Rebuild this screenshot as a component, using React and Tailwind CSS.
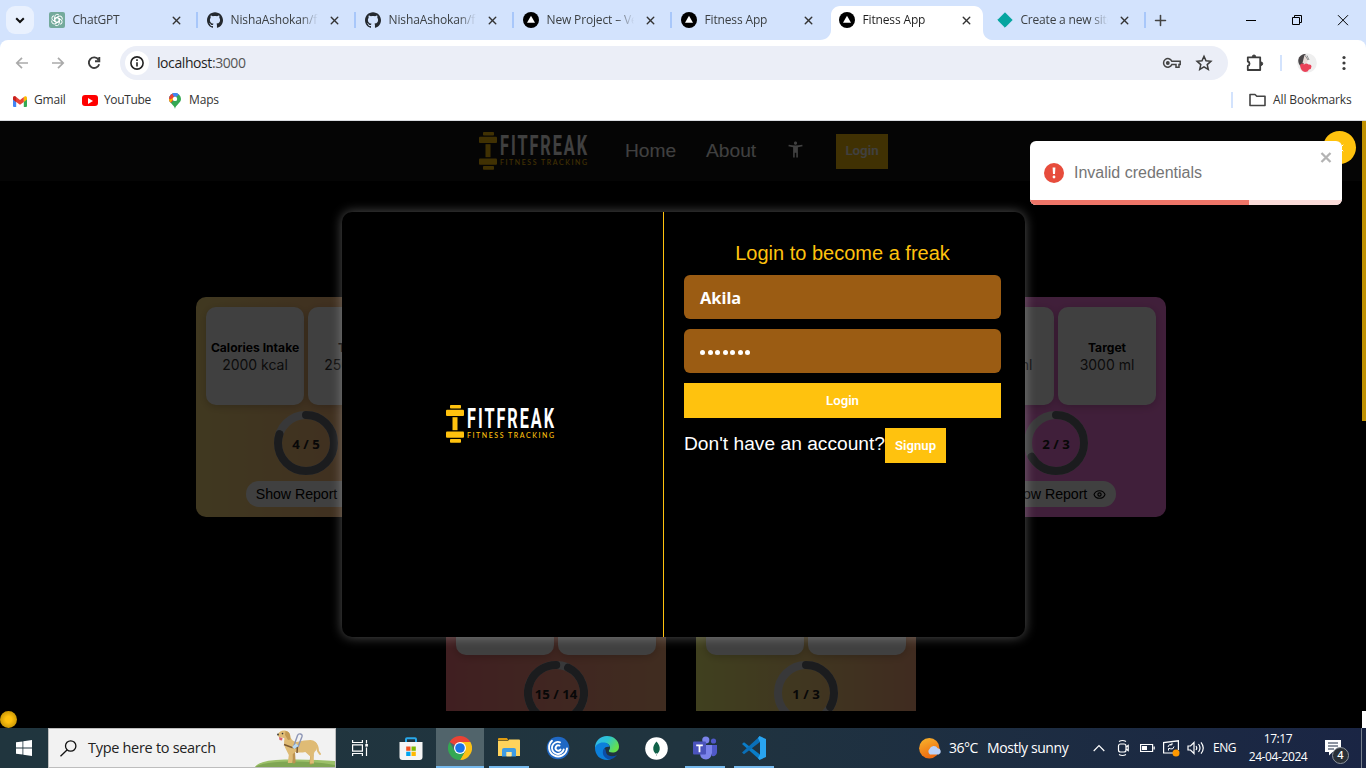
import React from "react";
import { SiGithub } from "react-icons/si";
import { MdAccessibilityNew } from "react-icons/md";
import { X, Plus, Eye } from "lucide-react";

const ui = "font-['Open_Sans','Noto_Sans',sans-serif]";
const arial = "font-['Liberation_Sans',Arial,sans-serif]";

/* ---------- Browser icons ---------- */

function ChatIcon() {
  return (
    <svg width="16" height="16" viewBox="0 0 16 16">
      <rect width="16" height="16" rx="2" fill="#74aa9c" />
      <g fill="none" stroke="#fff" strokeWidth="0.95">
        {[0, 60, 120, 180, 240, 300].map((a) => (
          <path key={a} transform={`rotate(${a} 8 8)`} d="M5.8 9.3V4.6a2.4 2.4 0 0 1 4.3-1.3M5.8 6.7L8 5.4l3.6 2.1" />
        ))}
      </g>
    </svg>
  );
}

function VercelIcon() {
  return (
    <svg width="16" height="16" viewBox="0 0 16 16">
      <circle cx="8" cy="8" r="8" fill="#000" />
      <path d="M8 3.8l4 7H4z" fill="#fff" />
    </svg>
  );
}

function DiamondIcon() {
  return (
    <svg width="16" height="16" viewBox="0 0 16 16">
      <path d="M8 .8L15.2 8 8 15.2.8 8z" fill="#05a5a0" stroke="#05a5a0" strokeLinejoin="round" />
    </svg>
  );
}

function GithubIcon() {
  return <SiGithub className="size-4 text-[#24292f]" />;
}

const tabs = [
  { title: "ChatGPT", icon: ChatIcon, spacing: "tracking-[-0.2px]" },
  { title: "NishaAshokan/f", icon: GithubIcon, spacing: "tracking-[-0.12px]" },
  { title: "NishaAshokan/f", icon: GithubIcon, spacing: "tracking-[-0.12px]" },
  { title: "New Project – Ve", icon: VercelIcon, spacing: "tracking-[-0.15px]" },
  { title: "Fitness App", icon: VercelIcon, spacing: "tracking-[-0.15px]" },
  { title: "Fitness App", icon: VercelIcon, spacing: "tracking-[-0.15px]", active: true },
  { title: "Create a new site", icon: DiamondIcon, spacing: "tracking-[-0.2px]" },
];

function Tab({ title, icon: Icon, spacing, active, hideLine }) {
  return (
    <div className="relative flex h-[34px] w-[158px] shrink-0 items-center pb-1.5 pl-[9px]">
      {active && (
        <svg className="absolute -left-2.5 top-0" width="172" height="34" viewBox="0 0 172 34">
          <path d="M0 34c6 0 11-4 11-10V9c0-5 4-9 9-9h134c5 0 9 4 9 9v15c0 6 4 10 10 10z" fill="#fff" />
        </svg>
      )}
      <div className="relative flex size-4 items-center justify-center">
        <Icon />
      </div>
      <div
        className={`relative ml-2 w-[89px] overflow-hidden whitespace-nowrap text-[12px] leading-4 ${spacing} ${
          active ? "text-[#1f1f1f]" : "text-[#3c4043]"
        } [mask-image:linear-gradient(to_right,#000_78%,transparent_98%)]`}
      >
        {title}
      </div>
      <X className="relative ml-[8.5px] size-[13px] text-[#333]" strokeWidth={2.6} />
      {!active && !hideLine && <div className="absolute right-0 top-1.5 h-4 w-0.5 bg-[#a8c7fa]" />}
    </div>
  );
}

function TabStrip() {
  return (
    <div className="flex h-10 items-start bg-[#d3e3fd] pl-1.5 pt-1.5">
      <div className="flex size-7 shrink-0 items-center justify-center rounded-[9px] bg-[#e9f1fe]">
        <svg width="10" height="7" viewBox="0 0 10 7" fill="none" stroke="#111" strokeWidth="2">
          <path d="M1.2 1.2L5 5l3.8-3.8" />
        </svg>
      </div>
      <div className="ml-[5.500px] flex">
        {tabs.map((t, i) => (
          <Tab key={i} {...t} hideLine={i === 4} />
        ))}
      </div>
      <Plus className="ml-[6.500px] mt-[5.5px] size-[17px] text-[#444]" strokeWidth={2.2} />
      <svg className="ml-[74px] mt-1" width="120" height="20" viewBox="0 0 120 20" fill="none" stroke="#000" strokeWidth="1">
        <path d="M3 10.5h10" />
        <path d="M49.5 7.5h7v7h-7zM51.5 7.5v-2h7v7h-2" />
        <path d="M95 5.2l10 10M105 5.2l-10 10" />
      </svg>
    </div>
  );
}

function AddressBar() {
  return (
    <div className="bg-[#d3e3fd]">
      <div className="flex h-[46px] items-center rounded-t-[8px] bg-white pl-[15px]">
        <svg width="90" height="16" viewBox="0 0 90 16" fill="none" strokeWidth="1.7">
          <path d="M13 8H2M7 2.8L1.8 8 7 13.2" stroke="#aaa" />
          <path d="M37 8h11M43 2.8L48.200 8 43 13.200" stroke="#aaa" />
          <path d="M83.500 4.600A5.300 5.300 0 1 0 84.200 9.300M84.300 2v4.200h-4.300" stroke="#3c3c3c" strokeWidth="1.900" />
        </svg>
        <div className="ml-[15px] flex h-[34px] w-[1108px] items-center rounded-full bg-[#ebeef7] pl-[5px]">
          <div className="flex size-6 items-center justify-center rounded-full bg-white">
            <svg width="14" height="14" viewBox="0 0 14 14" fill="none" stroke="#222" strokeWidth="1.6">
              <circle cx="7" cy="7" r="6.100" />
              <path d="M7 6.200v4.300M7 3.300v1.700" />
            </svg>
          </div>
          <span className="ml-2 flex-1 text-[14px] leading-5 tracking-[-0.42px] text-[#1f1f1f]">
            localhost<span className="text-[#555]">:3000</span>
          </span>
          <svg width="20" height="12" viewBox="0 0 20 12" fill="none" stroke="#444" strokeWidth="1.500">
            <path d="M9.800 4.200h8.400v3.400h-1.200v2.600h-3V7.600H9.800A4.300 4.300 0 1 1 9.800 4.200z" />
            <circle cx="5.800" cy="6" r="1.200" fill="#444" />
          </svg>
          <svg className="ml-[13px] mr-[15px]" width="18" height="18" viewBox="0 0 18 18" fill="none" stroke="#3c3c3c" strokeWidth="1.500">
            <path d="M9 2.300l2 4.500 4.900.500-3.700 3.300 1.100 4.800L9 12.900l-4.300 2.500 1.100-4.800L2.100 7.300 7 6.800z" />
          </svg>
        </div>
        <svg className="ml-[18px]" width="18" height="18" viewBox="0 0 18 18" fill="none" stroke="#3c3c3c" strokeWidth="1.800" strokeLinejoin="round">
          <path d="M1.800 3.300H14.200V16H1.800v-4.200a2.200 2.200 0 0 0 0-4.300z" />
          <path d="M6.300 2.700a1.700 1.700 0 0 1 3.400 0zM15 8a1.700 1.700 0 0 1 0 3.400z" fill="#3c3c3c" strokeWidth="1" />
        </svg>
        <div className="ml-4 h-4 w-0.5 bg-[#d3e3fd]" />
        <svg className="ml-[15px]" width="20" height="20" viewBox="0 0 20 20">
          <circle cx="10" cy="10" r="9.800" fill="#efefef" />
          <path d="M2 4.500Q5 .500 8.500 1l-1 9-4 3.500Q0 9 2 4.500z" fill="#4a4648" />
          <path d="M7.500 2l4 5-3 4-3-1z" fill="#e8dcd8" />
          <path d="M8.500 3l2.500 4M10 2.500l2 4.500" stroke="#777" strokeWidth=".8" />
          <path d="M3 12q2-2.500 4-.500 2.500-2 4.500 0 3-.500 3 2 0 2.500-2.500 3-1 2.500-4 2.500Q3.500 18 3 12z" fill="#ea4259" />
        </svg>
        <svg className="ml-[25px]" width="4" height="16" viewBox="0 0 4 16" fill="#3c3c3c">
          <circle cx="2" cy="2.500" r="1.600" />
          <circle cx="2" cy="8" r="1.600" />
          <circle cx="2" cy="13.500" r="1.600" />
        </svg>
      </div>
    </div>
  );
}

function Bookmarks() {
  return (
    <div className="flex h-[35px] items-center border-b border-[#dadce0] bg-white pb-1.5 pl-[13px] text-[12px] leading-4 text-[#333]">
      <svg className="mt-0.5" width="14" height="11" viewBox="0 0 14 11">
        <path d="M0 1.500v8.500q0 1 1 1h2.200V4.500z" fill="#4285f4" />
        <path d="M14 1.500v8.500q0 1-1 1h-2.200V4.500z" fill="#34a853" />
        <path d="M10.800 1L12 .3q2-.7 2 1.700v1.500l-3.200 2.500z" fill="#fbbc04" />
        <path d="M0 3.500V2Q0-.4 2 .3L3.200 1 7 4l3.800-3v5L7 8.800 3.200 6z" fill="#ea4335" />
        <path d="M0 3.500V2Q0-.4 2 .3L3.200 1v5z" fill="#c5221f" />
      </svg>
      <span className="ml-[7px] w-[32px] whitespace-nowrap tracking-[-0.2px]">Gmail</span>
      <div className="relative ml-4 mt-px flex h-[11px] w-4 items-center justify-center rounded-[3px] bg-[#f00]">
        <svg width="5" height="6" viewBox="0 0 5 6"><path d="M0 0l5 3-5 3z" fill="#fff" /></svg>
      </div>
      <span className="ml-1.5 w-[46px] whitespace-nowrap tracking-[-0.35px]">YouTube</span>
      <svg className="ml-[19px] mt-px" width="12" height="16" viewBox="0 0 12 16">
        <defs>
          <clipPath id="pin"><path d="M6 16C5.600 12 0 10 0 6a6 6 0 0 1 12 0c0 4-5.600 6-6 10z" /></clipPath>
        </defs>
        <g clipPath="url(#pin)">
          <rect width="12" height="16" fill="#34a853" />
          <path d="M0 11L12-1v-2H-2v14z" fill="#4285f4" />
          <path d="M-1 0h4l3 5-4 5-3-2z" fill="#ea4335" />
          <path d="M3 0l3 5 6-6z" fill="#4285f4" />
          <path d="M0 11l7-8-5.500 3.500L0 6z" fill="#fbbc04" />
        </g>
        <circle cx="6" cy="5.900" r="2.200" fill="#fff" />
      </svg>
      <span className="ml-2 tracking-[-0.15px]">Maps</span>
      <div className="ml-auto h-4 w-0.5 bg-[#d3e3fd]" />
      <svg className="ml-4" width="17" height="14" viewBox="0 0 17 14" fill="none" stroke="#444" strokeWidth="1.600" strokeLinejoin="round">
        <path d="M1 1.500h5l1.800 1.800H16V12.500H1z" />
      </svg>
      <span className="ml-[7px] mr-[14px] w-[79px] whitespace-nowrap tracking-[-0.1px]">All Bookmarks</span>
    </div>
  );
}

/* ---------- Page ---------- */

function Logo() {
  return (
    <svg width="110" height="40" viewBox="0 0 110 40">
      <g fill="#ffc20e">
        <rect x="4" y="1" width="11" height="3.500" rx=".8" />
        <rect x="0" y="5.800" width="18" height="6.200" rx="1" />
        <rect x="6.500" y="13.200" width="5" height="13" />
        <rect x="0" y="27.500" width="18" height="6.200" rx="1" />
        <rect x="4" y="35" width="11" height="3.800" rx=".8" />
      </g>
      <g transform="translate(21 23.500) scale(.58 1)">
        <text textLength="150" fill="#fff" fontFamily="Roboto" fontWeight="700" fontSize="28">FITFREAK</text>
      </g>
      <text x="21" y="34" textLength="87" fill="#ffc20e" fontFamily="Lato" fontWeight="500" fontSize="7">FITNESS TRACKING</text>
    </svg>
  );
}

function Navbar() {
  return (
    <div className="flex h-[60px] items-center bg-[#151515] pl-[478.500px]">
      <Logo />
      <span className="ml-[36.500px] w-[51px] text-[19.2px] text-white">Home</span>
      <span className="ml-[30px] w-[51px] text-[19.2px] text-white">About</span>
      <MdAccessibilityNew className="-mt-1 ml-[29px] size-[19px] text-white" />
      <button className="ml-[31px] h-[35px] w-[52px] bg-[#ffc20e] font-['Roboto',sans-serif] text-[13.3px] font-semibold text-white">Login</button>
    </div>
  );
}

const cards = [
  { name: "Calories Intake", value: "2000 kcal", target: "2500 kcal", label: "4 / 5", part: 0.8, bg: "bg-linear-to-r from-[#ffe080] to-[#ffad80]" },
  { name: "Sleep", value: "8 hrs", target: "8 hrs", label: "8 / 8", part: 1, bg: "bg-[#ffad80]", covered: true },
  { name: "Steps", value: "5000", target: "10000", label: "1 / 2", part: 0.5, bg: "bg-[#ffad80]", covered: true },
  { name: "Water", value: "2000 ml", target: "3000 ml", label: "2 / 3", part: 0.667, bg: "bg-[#ff7ce5]" },
  { name: "Weight", label: "15 / 14", part: 0.929, bg: "bg-linear-to-r from-[#ff7c84] to-[#ffb280]", flip: true },
  { name: "Workout", label: "1 / 3", part: 0.333, bg: "bg-linear-to-r from-[#ffff7c] to-[#ffad80]" },
];

function Ring({ part, label, flip }) {
  const len = 2 * Math.PI * 28;
  return (
    <div className="relative flex size-16 items-center justify-center">
      <svg className="absolute inset-0" width="64" height="64" viewBox="0 0 64 64" fill="none" strokeWidth="8">
        <circle cx="32" cy="32" r="28" stroke="#dfe0e3" />
        <circle
          cx="32" cy="32" r="28" stroke="#6b6f78" strokeLinecap="round"
          strokeDasharray={`${len * part} ${len}`}
          transform={flip ? "rotate(-64.500 32 32)" : "rotate(-90 32 32)"}
        />
      </svg>
      <span className="relative mt-0.5 font-['Noto_Sans',sans-serif] text-[13.2px] font-bold leading-4 text-[#222]">{label}</span>
    </div>
  );
}

function Tile({ name, value }) {
  return (
    <div className="flex size-[98px] flex-col items-center justify-center whitespace-nowrap rounded-[10px] bg-white font-['Inter',sans-serif] shadow-[0_2px_8px_rgba(0,0,0,0.2)]">
      {value && (
        <>
          <span className="text-[12.1px] font-bold leading-4 text-black">{name}</span>
          <span className="text-[14px] leading-[17px] text-[#333]">{value}</span>
        </>
      )}
    </div>
  );
}

function Card({ name, value, target, label, part, bg, flip, covered }) {
  if (covered) return <div className={`size-[220px] rounded-[10px] ${bg}`} />;
  return (
    <div className={`flex size-[220px] flex-col items-center rounded-[10px] pt-2.5 ${bg}`}>
      <div className="flex gap-1">
        <Tile name={name} value={value} />
        <Tile name="Target" value={target} />
      </div>
      <div className="mt-1.5">
        <Ring part={part} label={label} flip={flip} />
      </div>
      {value && (
        <div className="mt-1.5 flex h-[26px] w-[120px] items-center justify-center gap-1.5 whitespace-nowrap rounded-full bg-white pt-px text-[14.2px] tracking-[-0.05px] text-black">
          Show Report
          <Eye className="size-[13px]" strokeWidth={2.1} />
        </div>
      )}
    </div>
  );
}

function LoginModal() {
  return (
    <div className="flex h-[425px] w-[683px] rounded-[10px] bg-black shadow-[0_0_12px_rgba(255,255,255,0.33)]">
      <div className="flex w-[322px] items-center justify-center border-r border-[#ffc20e] pb-0.5 pr-1">
        <Logo />
      </div>
      <div className="flex flex-1 flex-col pl-5 pr-6 pt-[27px]">
        <h1 className="text-center text-[20px] leading-7 text-[#ffc20e]">Login to become a freak</h1>
        <div className="mt-2 flex h-11 items-center rounded-[6px] bg-[#9b5c13] pl-4 pt-0.5 font-['Noto_Sans',sans-serif] text-[16.4px] font-bold text-white">Akila</div>
        <div className="mt-2.5 flex h-11 items-center gap-[2.500px] rounded-[6px] bg-[#9b5c13] pl-4">
          {[0, 1, 2, 3, 4, 5, 6].map((i) => (
            <span key={i} className="mt-0.5 size-[5px] rounded-full bg-white" />
          ))}
        </div>
        <button className="mt-2.5 h-[35px] bg-[#ffc20e] font-['Roboto',sans-serif] text-[13.2px] font-semibold text-white">Login</button>
        <div className="mt-2.5 flex text-white">
          <span className="w-[201px] whitespace-nowrap pt-0.5 text-[19.2px] leading-7">Don't have an account?</span>
          <button className="h-[35px] w-[61px] bg-[#ffc20e] font-['Roboto',sans-serif] text-[13.2px] font-semibold">Signup</button>
        </div>
      </div>
    </div>
  );
}

function Toast() {
  return (
    <div className="absolute left-[1030px] top-5 h-16 w-[312px] overflow-hidden rounded-[6px] bg-white">
      <div className="flex h-full items-center pl-3.5">
        <svg width="20" height="20" viewBox="0 0 20 20">
          <circle cx="10" cy="10" r="10" fill="#e74c3c" />
          <path d="M8.600 4.500h2.800l-.4 6.500H9z" fill="#fff" />
          <circle cx="10" cy="14" r="1.400" fill="#fff" />
        </svg>
        <span className="ml-2.5 text-[16px] text-[#757575]">Invalid credentials</span>
      </div>
      <svg className="absolute right-2.5 top-[11px]" width="12" height="11" viewBox="0 0 12 11" stroke="#b3b3b3" strokeWidth="2.300">
        <path d="M1.500 1l9 9M10.500 1l-9 9" />
      </svg>
      <div className="absolute inset-x-0 bottom-0 h-[5px] bg-[#fadbd8]">
        <div className="h-full w-[219px] bg-[#ee7568]" />
      </div>
    </div>
  );
}

function Page() {
  return (
    <div className={`relative h-[607px] overflow-hidden bg-black ${arial}`}>
      <div className="flex h-[590px]">
        <div className="w-[1362px] overflow-hidden">
          <Navbar />
          <div className="mt-[116px] flex flex-wrap justify-center gap-[30px] px-[150px]">
            {cards.map((c) => (
              <Card key={c.name} {...c} />
            ))}
          </div>
        </div>
        <div className="w-1">
          <div className="h-[300px] bg-[#bf9000]" />
        </div>
      </div>
      <div className="flex h-[17px] justify-end">
        <div className="w-1 bg-white" />
      </div>
      <div className="absolute left-0 top-0 flex h-[607px] w-[1362px] justify-center bg-black/75 pl-[5px] pt-[91px]">
        <LoginModal />
      </div>
      <div className="absolute left-0 top-[590px] size-[17px] rounded-full bg-[radial-gradient(circle,#ffc10e_25%,#c79505_75%)]" />
      <div className="absolute left-[1323px] top-2.5 flex size-[33px] items-center justify-center rounded-full bg-[#ffc20e] text-white">
        <X className="size-3" />
      </div>
      <Toast />
    </div>
  );
}

/* ---------- Taskbar ---------- */

function Dog() {
  return (
    <svg width="80" height="38" viewBox="0 0 80 38">
      <path d="M0 38q4-7 30-7.500Q60 30 80 32v6z" fill="#9cc069" />
      <path d="M0 38q8-5 34-5.500T80 36v2z" fill="#7fa653" />
      <g strokeLinecap="round" strokeLinejoin="round">
        <path d="M38.500 24l.5 9M54 22l3 4-1 8" stroke="#bd9350" strokeWidth="3.200" fill="none" />
        <path d="M60 14q3 3 3 8l2 3" stroke="#dfbb75" strokeWidth="2" fill="none" />
        <path d="M23 5q2-4 7-3.500 5 .5 5.500 7 2 4 6 4.500 8-2 14-2 6 .5 7 6-.5 4-3 6l-1 3 .5 8.500h-4l.3-7-5-4.500q-5 1-10 0l-2.500 2-.5 9h-4.500l1-8-3.500-7q-2-4-.8-9.500-1-1-5.500-1.500-2-1-1-3z" fill="#dfbb75" />
      </g>
      <path d="M30.500 2q4 .5 4.500 4l.5 4.500-2.500.5-3-5z" fill="#c39a52" />
      <path d="M24 8l3.500 1-.5 2.500-2.500-.5z" fill="#d9606a" />
      <circle cx="27.500" cy="4.600" r=".8" fill="#333" /><circle cx="23" cy="5.500" r=".9" fill="#333" />
      <path d="M29 15.500l8 3h6M42.500 17l-.5 7" stroke="#7c5a34" strokeWidth="1.500" fill="none" />
      <path d="M38.500 18l4-11.500q.8-2 3-1.500 2 .5 1.500 2.500L43 18" stroke="#8c95b5" strokeWidth="1.400" fill="none" />
      <path d="M37 18l4-3.500 2.500 2.500-4 3z" fill="#b8daf5" />
    </svg>
  );
}

function AppCell({ children, line, active }) {
  return (
    <div className={`relative flex h-10 w-12 shrink-0 items-center justify-center ${active ? "bg-[#51646b]" : ""}`}>
      {children}
      {line && <div className={`absolute bottom-0 h-0.5 bg-[#76b9ed] ${active ? "w-12" : "w-10"}`} />}
    </div>
  );
}

const StoreIcon = () => (
  <svg className="mt-px" width="24" height="24" viewBox="0 0 24 24">
    <path d="M7 6V2.200q0-1 1-1h8q1 0 1 1V6" fill="none" stroke="#28a8ea" strokeWidth="2" />
    <path d="M.500 5h23v15q0 3-3 3h-17q-3 0-3-3z" fill="#f5f5f5" />
    <path d="M7.200 9.500h4.300v4.300H7.200z" fill="#f25022" /><path d="M12.500 9.500h4.300v4.300h-4.300z" fill="#7fba00" />
    <path d="M7.200 14.700h4.300V19H7.200z" fill="#00a4ef" /><path d="M12.500 14.700h4.300V19h-4.300z" fill="#ffb900" />
  </svg>
);

const ChromeIcon = () => (
  <svg width="24" height="24" viewBox="0 0 24 24">
    <path d="M12 12L1.600 6A12 12 0 0 1 22.400 6z" fill="#ea4335" />
    <path d="M12 12V6h10.400A12 12 0 0 1 12 24l5.200-9z" fill="#fbc116" />
    <path d="M12 12l5.200 3L12 24A12 12 0 0 1 1.600 6l5.200 9z" fill="#34a853" />
    <circle cx="12" cy="12" r="6" fill="#fff" /><circle cx="12" cy="12" r="4.800" fill="#1a73e8" />
  </svg>
);

const FolderIcon = () => (
  <svg width="22" height="20" viewBox="0 0 22 20">
    <path d="M0 1q0-1 1-1h8l1.500 2.500H0z" fill="#e09c11" />
    <path d="M0 3h10l1-1.500h10q1 0 1 1V18H0z" fill="#ffd35c" />
    <path d="M4 18.500V12q0-2 2-2h10q2 0 2 2v6.500h-4.500V14h-5v4.500z" fill="#3f9be3" />
    <path d="M8.500 18.500V14h5v4.500z" fill="#ffe69a" />
  </svg>
);

const SwirlIcon = () => (
  <svg width="24" height="24" viewBox="0 0 24 24">
    <circle cx="12" cy="12" r="11.300" fill="#1f68c4" />
    <g fill="none" stroke="#fff" strokeWidth="1.900" strokeLinecap="round">
      <path d="M6 4.800A9 9 0 1 0 21 12.500" />
      <path d="M12.500 3.200A8.800 8.800 0 0 1 20.500 10" stroke="#1f68c4" />
      <path d="M14 6.300A6 6 0 1 0 17.700 13.500" />
      <path d="M13.500 9.600a2.700 2.700 0 1 0 1 4" />
    </g>
  </svg>
);

const EdgeIcon = () => (
  <svg width="24" height="24" viewBox="0 0 24 24">
    <defs>
      <linearGradient id="edgeTop" x1="0" y1="0" x2="1" y2=".5"><stop offset="0" stopColor="#35b4f0" /><stop offset=".5" stopColor="#2bc3d2" /><stop offset="1" stopColor="#66e04b" /></linearGradient>
    </defs>
    <path d="M0 12C0 5 5 0 12 0s12 5 12 10.500c0 4-3 6-6.500 6-3 0-4-1-3.500-2s1-1.500 1-3C15 9 12.500 7 9 7c-5 0-8.500 4-9 6z" fill="url(#edgeTop)" />
    <path d="M0 12c.500-3 4-5.500 8-5.500 4 0 6.500 2 6.500 4.500-5-1-6.500 3-5.500 6 1.300 4 6 5.500 10 3.500-2 2.500-4.500 3.500-7 3.500C5 24 0 19 0 12z" fill="#0c7fda" />
    <path d="M9.500 12c-3 3-2 9 3 11 3 1 7-.500 9.500-4-4 2-9 1.500-10.500-1.500-1-2-.500-4-2-5.500z" fill="#0c4ea6" />
  </svg>
);

const MongoIcon = () => (
  <svg width="23" height="23" viewBox="0 0 23 23">
    <circle cx="11.500" cy="11.500" r="11.300" fill="#fff" />
    <path d="M11.500 4.500c2 2.500 3.700 4.500 3.200 8-.4 2.500-1.900 3.800-3.200 5-1.300-1.200-2.800-2.500-3.200-5-.5-3.500 1.200-5.500 3.200-8z" fill="#116149" />
    <path d="M11.500 16v3" stroke="#b8c4c2" />
  </svg>
);

const TeamsIcon = () => (
  <svg width="24" height="24" viewBox="0 0 24 24">
    <circle cx="12.800" cy="4" r="3.600" fill="#7b83eb" /><circle cx="20.500" cy="5" r="2.600" fill="#5059c9" />
    <path d="M16 9h8v7a4 4 0 0 1-5 4z" fill="#5059c9" /><path d="M7 9h12v8q-1 6-6 6.500Q7 23 7 17z" fill="#7b83eb" />
    <rect y="5.500" width="13" height="13" rx="1" fill="#4b53bc" />
    <path d="M3.200 8.500h6.600v1.700H7.400v6H5.600v-6H3.200z" fill="#fff" />
  </svg>
);

const CodeIcon = () => (
  <svg width="24" height="24" viewBox="0 0 24 24">
    <path d="M0 8l2-1.800 16 12.200V24z" fill="#0a7dc8" />
    <path d="M0 16.500l2 1.800L18 6V0z" fill="#0a6fb8" />
    <path d="M17.500 0L24 3v18l-6.500 3-1.500-2 2-3.600V6l-2-4z" fill="#29a4f0" />
  </svg>
);

function Taskbar() {
  return (
    <div className="flex h-10 items-center bg-linear-to-r from-[#20353e] via-[#20343f] to-[#1a2544] text-white">
      <div className="flex w-12 justify-center">
        <svg width="16" height="16" viewBox="0 0 16 16" fill="#fff">
          <path d="M0 2.300L6.500 1.400v6.200H0zM7.300 1.300L16 0v7.600H7.300zM0 8.400h6.500v6.200L0 13.700zM7.300 8.400H16V16l-8.700-1.300z" />
        </svg>
      </div>
      <div className="flex h-10 w-72 items-center overflow-hidden border border-[#bdbdbd] bg-[#f2f2f2] pl-[11px]">
        <svg width="17" height="17" viewBox="0 0 17 17" fill="none" stroke="#111" strokeWidth="1.300">
          <circle cx="10.700" cy="6" r="5.200" /><path d="M7 10L.500 16.300" />
        </svg>
        <span className="ml-[11px] w-[128px] whitespace-nowrap text-[14.500px] tracking-[-0.3px] text-[#222]">Type here to search</span>
        <div className="ml-auto"><Dog /></div>
      </div>
      <div className="flex gap-px">
        <AppCell>
          <svg width="18" height="16" viewBox="0 0 18 16" fill="none" stroke="#fff" strokeWidth="1.200">
            <path d="M1.600 0v2.500h9.800V0M1.600 16v-2.500h9.800V16M1.600 4.800h9.800v6.400H1.600zM15.500 0v3.500M15.500 7.500V16" /><path d="M14.300 4h2.600v2.600h-2.600z" fill="#fff" stroke="none" />
          </svg>
        </AppCell>
        <div className="ml-0.5"><AppCell><StoreIcon /></AppCell></div>
        <AppCell active line><ChromeIcon /></AppCell>
        <AppCell line><FolderIcon /></AppCell>
        <AppCell><SwirlIcon /></AppCell>
        <AppCell><EdgeIcon /></AppCell>
        <AppCell><MongoIcon /></AppCell>
        <AppCell line><TeamsIcon /></AppCell>
        <AppCell line><CodeIcon /></AppCell>
      </div>
      <div className="ml-auto flex items-center">
        <svg width="23" height="21" viewBox="0 0 23 21">
          <defs><linearGradient id="sun" x1="0" y1="0" x2=".4" y2="1"><stop offset="0" stopColor="#f8b62d" /><stop offset="1" stopColor="#ee6b10" /></linearGradient></defs>
          <circle cx="10.300" cy="10.300" r="10.200" fill="url(#sun)" />
          <path d="M11 16.500a3.500 3.500 0 0 1-.5-5.500 4.500 4.500 0 0 1 8.200-.7 3.200 3.200 0 0 1 1 6.200z" fill="#b9d0f8" />
        </svg>
        <span className="ml-[7px] w-[30px] whitespace-nowrap pb-px text-[14px] tracking-[-0.5px]">36°C</span>
        <span className="ml-2 w-[82px] whitespace-nowrap pb-px text-[14px] tracking-[-0.42px]">Mostly sunny</span>
        <svg className="ml-6" width="112" height="20" viewBox="0 0 112 20" fill="none" stroke="#fff" strokeWidth="1.200">
          <path d="M.700 13L6 7.700l5.300 5.300" />
          <rect x="25.500" y="6" width="7.500" height="8" rx="2" /><path d="M33 9l2.200-1.500v5L33 11M26 3.500q3.500-2 7 0M26 16.500q3.500 2 7 0" />
          <path d="M47.600 6.500h12v7h-12zM61.200 8.500v3" /><path d="M49 8h5v4h-5z" fill="#fff" stroke="none" />
          <path d="M80 15H70.600V4.600L85.400 2.800V12" /><path d="M75 9q.5-3 3.500-2.500M79 4.800v2h-2M81 8.500q-.5 3-3.500 2.500M75.500 12.500v-2h2" strokeWidth="1" /><circle cx="83" cy="15" r="3.500" fill="#ff9800" stroke="none" />
          <path d="M95 8h2.500L101 4.500v11L97.500 12H95zM103 8q1.500 2 0 4M105.500 6q3 4 0 8M108 4.300q4.500 5.700 0 11.400" />
        </svg>
        <span className="ml-[8px] w-[24px] whitespace-nowrap text-[12px] tracking-[-0.45px]">ENG</span>
        <div className="ml-[11px] -mt-px w-[60px] whitespace-nowrap text-center text-[12px] leading-[18px] tracking-[-0.4px]">
          <div>17:17</div>
          <div>24-04-2024</div>
        </div>
        <div className="relative ml-[17px] h-6 w-6">
          <svg width="24" height="24" viewBox="0 0 24 24">
            <path d="M0 4h16v12H7.500L4 19.500V16H0z" fill="#fff" /><path d="M3 7h10M3 10h10M3 13h6" stroke="#1c2a42" />
          </svg>
          <div className="absolute left-[7px] top-[11px] flex size-[17px] items-center justify-center rounded-full border border-[#8d949c] bg-[#2a3037] text-[11px] font-semibold">4</div>
        </div>
        <div className="ml-3 mr-1 h-10 w-px bg-[#77808d]" />
      </div>
    </div>
  );
}

export default function App() {
  return (
    <div className={`flex h-[768px] w-[1366px] flex-col overflow-hidden ${ui}`}>
      <TabStrip />
      <AddressBar />
      <Bookmarks />
      <Page />
      <Taskbar />
    </div>
  );
}
